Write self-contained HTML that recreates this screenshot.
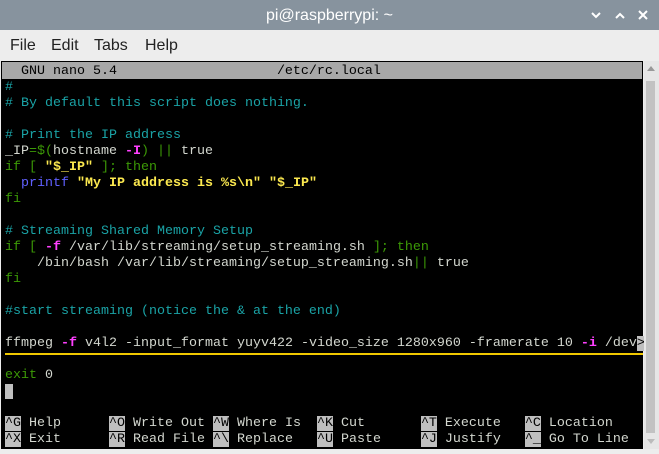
<!DOCTYPE html><html><head><style>
body{margin:0;width:659px;height:449px;overflow:hidden;background:#ededed;font-family:"Liberation Sans",sans-serif}
#tb{position:absolute;left:0;top:0;width:659px;height:30px;background:#87939e;color:#fff;font-size:16px;text-align:center;line-height:32px}
#mb{position:absolute;top:30px;left:0;width:659px;height:31px;font-size:16px;color:#222;line-height:31px}
#mb span{position:absolute}
#term{position:absolute;left:1px;top:61px;width:642px;height:388px;background:#000;border:1px solid #000;box-sizing:border-box}
pre{margin:0;position:absolute;left:3px;top:2px;font-family:"Liberation Mono",monospace;font-size:13.33px;line-height:16px;color:#d3d7cf;white-space:pre}
.c{color:#1aa3a6}.g{color:#3c9a06}.y{color:#fce94f;font-weight:bold}.b{color:#6060ff}.m{color:#ff40ff;font-weight:bold}.k{background:#bfbfbf;color:#000}
#hd{position:absolute;left:0;top:0;width:640px;height:17px;background:#a8a8a8}
#sb{position:absolute;left:644px;top:61px;width:15px;height:388px;background:#e6e6e6}
</style></head><body>
<div id="tb">pi@raspberrypi: ~
<svg style="position:absolute;left:590px;top:10px" width="60" height="12"><path d="M2 3l4 4 4-4" stroke="#fff" stroke-width="2" fill="none"/><path d="M26 8l4-4 4 4" stroke="#fff" stroke-width="2" fill="none"/><path d="M49 1l8 8M57 1l-8 8" stroke="#fff" stroke-width="2"/></svg></div>
<div id="mb"><span style="left:10px">File</span><span style="left:51px">Edit</span><span style="left:94px">Tabs</span><span style="left:145px">Help</span></div>
<div id="term"><div id="hd"></div>
<pre><span style="color:#000">  GNU nano 5.4                    /etc/rc.local</span>
<span class="c">#</span>
<span class="c"># By default this script does nothing.</span>

<span class="c"># Print the IP address</span>
_IP<span class="g">=$(</span>hostname <span class="m">-I</span><span class="g">) ||</span> true
<span class="g">if [ </span><span class="y">"$_IP"</span><span class="g"> ]; then</span>
  <span class="b">printf</span> <span class="y">"My IP address is %s\n" "$_IP"</span>
<span class="g">fi</span>

<span class="c"># Streaming Shared Memory Setup</span>
<span class="g">if [ </span><span class="m">-f</span> /var/lib/streaming/setup_streaming.sh <span class="g">]; then</span>
    /bin/bash /var/lib/streaming/setup_streaming.sh<span class="g">||</span> true
<span class="g">fi</span>

<span class="c">#start streaming (notice the &amp; at the end)</span>

ffmpeg <span class="m">-f</span> v4l2 -input_format yuyv422 -video_size 1280x960 -framerate 10 <span class="m">-i</span> /dev<span class="k">&gt;</span>

<span class="g">exit</span> 0
<span class="k"> </span>

<span class="k">^G</span> Help      <span class="k">^O</span> Write Out <span class="k">^W</span> Where Is  <span class="k">^K</span> Cut       <span class="k">^T</span> Execute   <span class="k">^C</span> Location
<span class="k">^X</span> Exit      <span class="k">^R</span> Read File <span class="k">^\</span> Replace   <span class="k">^U</span> Paste     <span class="k">^J</span> Justify   <span class="k">^_</span> Go To Line</pre>
<div style="position:absolute;left:3px;top:291px;width:638px;height:2px;background:#f0c800"></div>
</div>
<div id="sb"><svg width="15" height="388"><path d="M3 10l4-5 4 5z" fill="#999"/><rect x="2" y="20" width="9" height="352" fill="#c2c2c2"/><path d="M3 378l4 5 4-5z" fill="#bbb"/></svg></div>
</body></html>
